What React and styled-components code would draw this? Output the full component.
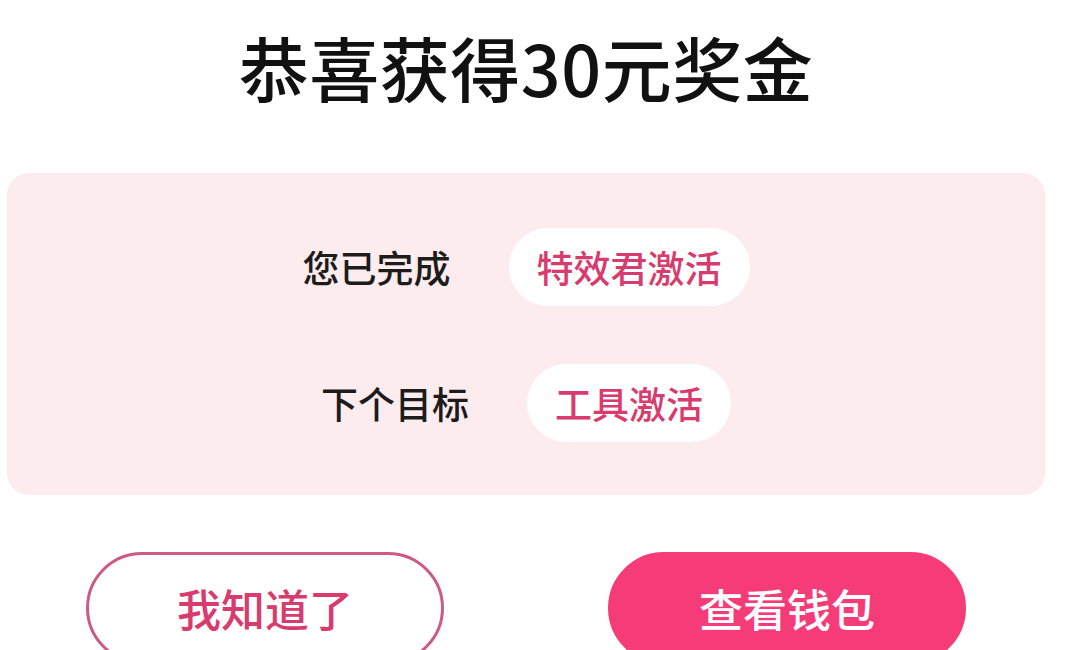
import React from 'react';
import styled, { createGlobalStyle } from 'styled-components';

const colors = {
  ink: '#111111',
  label: '#1c1c1c',
  card: '#fdeced',
  rose: '#d83b6d',
  roseBorder: '#cc5a84',
  hot: '#f63c78',
};

const GlobalStyle = createGlobalStyle`
  html, body {
    margin: 0;
    padding: 0;
    height: 100%;
    overflow: hidden;
    background: #ffffff;
  }
  body {
    font-family: "Noto Sans CJK SC", "Noto Sans", sans-serif;
  }
`;

const Page = styled.div`
  display: flex;
  flex-direction: column;
  align-items: center;
  width: 1038px;
  margin-left: 7px;
`;

const Title = styled.h1`
  margin: 31px 0 0 0;
  font-size: 70px;
  line-height: 72px;
  font-weight: 500;
  color: ${colors.ink};
  letter-spacing: 0.5px;
`;

const Card = styled.div`
  display: flex;
  flex-direction: column;
  align-items: center;
  gap: 58px;
  box-sizing: border-box;
  width: 100%;
  height: 322px;
  margin-top: 70px;
  padding-top: 55px;
  background: ${colors.card};
  border-radius: 22px;
`;

const Row = styled.div`
  display: flex;
  align-items: center;
  gap: 58px;
`;

const Label = styled.span`
  font-size: 37px;
  font-weight: 500;
  color: ${colors.label};
`;

const Pill = styled.span`
  display: flex;
  align-items: center;
  height: 78px;
  padding: 0 28px;
  border-radius: 39px;
  background: #ffffff;
  font-size: 37px;
  font-weight: 500;
  color: ${colors.rose};
`;

const Actions = styled.div`
  display: flex;
  gap: 164px;
  margin-top: 57px;
`;

const ActionButton = styled.button`
  display: flex;
  align-items: center;
  justify-content: center;
  box-sizing: border-box;
  width: 358px;
  height: 112px;
  border-radius: 56px;
  border: 3px solid ${(props) => (props.primary ? colors.hot : colors.roseBorder)};
  background: ${(props) => (props.primary ? colors.hot : '#ffffff')};
  color: ${(props) => (props.primary ? '#ffffff' : colors.rose)};
  font-family: inherit;
  font-size: 44px;
  font-weight: 500;
  cursor: pointer;
`;

function App() {
  return (
    <Page>
      <GlobalStyle />
      <Title>恭喜获得30元奖金</Title>
      <Card>
        <Row>
          <Label>您已完成</Label>
          <Pill>特效君激活</Pill>
        </Row>
        <Row>
          <Label>下个目标</Label>
          <Pill>工具激活</Pill>
        </Row>
      </Card>
      <Actions>
        <ActionButton>我知道了</ActionButton>
        <ActionButton primary>查看钱包</ActionButton>
      </Actions>
    </Page>
  );
}

export default App;
